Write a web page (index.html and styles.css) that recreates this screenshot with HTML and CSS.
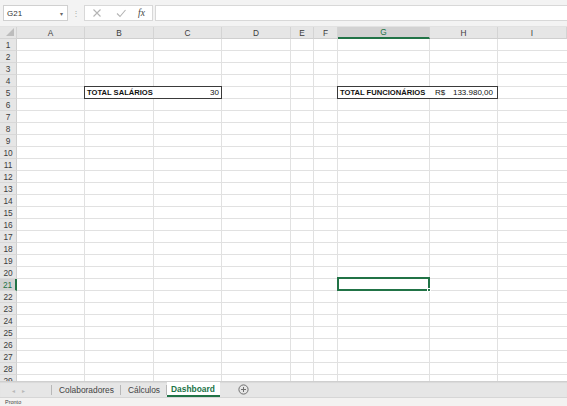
FILE: index.html
```html
<!DOCTYPE html>
<html lang="pt">
<head>
<meta charset="utf-8">
<title>Dashboard</title>
<link rel="stylesheet" href="styles.css">
</head>
<body>
<div class="app">
  <div class="toolbar">
    <div class="namebox"><span>G21</span><span class="caret">▾</span></div>
    <div class="grip">⋮</div>
    <div class="fxbox">
      <svg class="ico" width="10" height="10" viewBox="0 0 10 10"><path d="M1.5 1.5 L8.5 8.5 M8.5 1.5 L1.5 8.5" stroke="#b4b4b4" stroke-width="1.1" fill="none"/></svg>
      <svg class="ico" width="10" height="10" viewBox="0 0 10 10"><path d="M1 5.5 L4 8.5 L9.5 2" stroke="#b4b4b4" stroke-width="1.1" fill="none"/></svg>
      <span class="fx">fx</span>
    </div>
    <div class="formula"></div>
  </div>

  <div class="sheet">
    <div class="corner"><svg width="8" height="8" viewBox="0 0 8 8"><polygon points="8,0 8,8 0,8" fill="#bdbdbd"/></svg></div>
    <div class="colhead">A</div>
    <div class="colhead">B</div>
    <div class="colhead">C</div>
    <div class="colhead">D</div>
    <div class="colhead">E</div>
    <div class="colhead">F</div>
    <div class="colhead active">G</div>
    <div class="colhead">H</div>
    <div class="colhead">I</div>

    <div class="body"></div>

    <div class="rowhead">1</div>
    <div class="rowhead">2</div>
    <div class="rowhead">3</div>
    <div class="rowhead">4</div>
    <div class="rowhead">5</div>
    <div class="rowhead">6</div>
    <div class="rowhead">7</div>
    <div class="rowhead">8</div>
    <div class="rowhead">9</div>
    <div class="rowhead">10</div>
    <div class="rowhead">11</div>
    <div class="rowhead">12</div>
    <div class="rowhead">13</div>
    <div class="rowhead">14</div>
    <div class="rowhead">15</div>
    <div class="rowhead">16</div>
    <div class="rowhead">17</div>
    <div class="rowhead">18</div>
    <div class="rowhead">19</div>
    <div class="rowhead">20</div>
    <div class="rowhead active">21</div>
    <div class="rowhead">22</div>
    <div class="rowhead">23</div>
    <div class="rowhead">24</div>
    <div class="rowhead">25</div>
    <div class="rowhead">26</div>
    <div class="rowhead">27</div>
    <div class="rowhead">28</div>
    <div class="rowhead">29</div>

    <div class="box box-salarios"><b>TOTAL SALÁRIOS</b><span>30</span></div>
    <div class="box box-func"><b class="lbl">TOTAL FUNCIONÁRIOS</b><span class="cur">R$</span><span class="val">133.980,00</span></div>
    <div class="selection"><span class="handle"></span></div>
  </div>

  <div class="tabs">
    <div class="nav"><span>◂</span><span>▸</span></div>
    <div class="tab">Colaboradores</div>
    <div class="tab">Cálculos</div>
    <div class="tab current">Dashboard</div>
    <div class="add"><svg width="11" height="11" viewBox="0 0 11 11"><circle cx="5.5" cy="5.5" r="4.6" stroke="#6f6f6f" stroke-width="1" fill="none"/><path d="M5.5 3 V8 M3 5.5 H8" stroke="#6f6f6f" stroke-width="1"/></svg></div>
  </div>

  <div class="status">Pronto</div>
</div>
</body>
</html>
```

FILE: styles.css
```css
* { box-sizing: border-box; }
html, body { margin: 0; padding: 0; }
body {
  width: 567px;
  height: 406px;
  overflow: hidden;
  font-family: "Liberation Sans", Arial, sans-serif;
  color: #222;
  background: #fff;
}
.app {
  width: 567px;
  height: 406px;
  display: flex;
  flex-direction: column;
  overflow: hidden;
}

/* toolbar */
.toolbar {
  height: 27px;
  flex: 0 0 27px;
  background: #f3f3f3;
  display: flex;
  align-items: flex-start;
  padding: 5px 0 0 3px;
  border-bottom: 1px solid #e2e2e2;
}
.namebox {
  width: 65px;
  height: 16px;
  background: #fff;
  border: 1px solid #d0d0d0;
  display: flex;
  align-items: center;
  justify-content: space-between;
  padding: 0 4px 0 3px;
  font-size: 8px;
  color: #333;
}
.caret { font-size: 6px; color: #666; }
.grip {
  width: 16px;
  height: 16px;
  display: flex;
  align-items: center;
  justify-content: center;
  font-size: 8px;
  color: #a8a8a8;
}
.fxbox {
  width: 69px;
  height: 16px;
  background: #fff;
  border: 1px solid #d8d8d8;
  display: flex;
  align-items: center;
  padding-left: 7px;
  gap: 14px;
}
.ico { display: block; }
.fx {
  font-family: "Liberation Serif", "Times New Roman", serif;
  font-style: italic;
  font-size: 9.5px;
  color: #444;
  margin-left: -2px;
}
.formula {
  flex: 1;
  height: 16px;
  margin-left: 2px;
  background: #fff;
  border: 1px solid #d8d8d8;
  border-right: none;
}

/* sheet grid */
.sheet {
  height: 354px;
  flex: 0 0 354px;
  overflow: hidden;
  display: grid;
  grid-template-columns: 17px 68px 69px 68px 69px 23px 24px 92px 68px 69px;
  grid-auto-rows: 12px;
  font-size: 8px;
}
.corner {
  grid-row: 1;
  grid-column: 1;
  background: #e6e6e6;
  border-right: 1px solid #d4d4d4;
  border-bottom: 1px solid #d4d4d4;
  display: flex;
  align-items: flex-end;
  justify-content: flex-end;
  padding: 0 2px 2px 0;
}
.colhead {
  grid-row: 1;
  background: #e6e6e6;
  border-right: 1px solid #d4d4d4;
  border-bottom: 1px solid #cfcfcf;
  display: flex;
  align-items: center;
  justify-content: center;
  color: #3c3c3c;
  font-size: 8.3px;
}
.colhead.active {
  background: #d2d2d2;
  color: #217346;
  border-bottom: 2px solid #217346;
}
.body {
  grid-row: 2 / 32;
  grid-column: 2 / 11;
  background:
    linear-gradient(to right, transparent 67px, #e1e1e1 67px 68px, transparent 68px 136px, #e1e1e1 136px 137px, transparent 137px 204px, #e1e1e1 204px 205px, transparent 205px 273px, #e1e1e1 273px 274px, transparent 274px 296px, #e1e1e1 296px 297px, transparent 297px 320px, #e1e1e1 320px 321px, transparent 321px 412px, #e1e1e1 412px 413px, transparent 413px 480px, #e1e1e1 480px 481px, transparent 481px),
    repeating-linear-gradient(to bottom, transparent 0 11px, #e1e1e1 11px 12px);
}
.rowhead {
  grid-column: 1;
  background: #e6e6e6;
  border-right: 1px solid #cfcfcf;
  border-bottom: 1px solid #d8d8d8;
  display: flex;
  align-items: center;
  justify-content: center;
  color: #3c3c3c;
  font-size: 8.3px;
}
.rowhead.active {
  background: #d2d2d2;
  color: #217346;
  border-right: 2px solid #217346;
}

.box {
  border: 1px solid #3a3a3a;
  background: #fff;
  display: flex;
  align-items: center;
  padding: 0 2px;
  margin: -1px 0 0 -1px;
  font-size: 7.6px;
  color: #111;
  z-index: 1;
}
.box b { font-weight: bold; }
.box span { font-size: 8px; }
.box-salarios {
  grid-row: 6;
  grid-column: 3 / 5;
  justify-content: space-between;
}
.box-func {
  grid-row: 6;
  grid-column: 8 / 10;
}
.box-func .lbl { width: 91px; }
.box-func .cur { margin-left: 4px; }
.box-func .val { margin-left: auto; margin-right: 2px; }

.selection {
  grid-row: 22;
  grid-column: 8;
  border: 2px solid #217346;
  margin: -2px 0 0 -1px;
  z-index: 2;
  position: relative;
}
.handle {
  position: absolute;
  right: -3px;
  bottom: -3px;
  width: 4px;
  height: 4px;
  background: #217346;
  border: 1px solid #fff;
}

/* tabs */
.tabs {
  height: 16px;
  flex: 0 0 16px;
  background: #e6e6e6;
  border-top: 1px solid #cfcfcf;
  box-shadow: inset 0 1px 1px rgba(0,0,0,0.06);
  display: flex;
  align-items: stretch;
  font-size: 8.4px;
  color: #444;
}
.nav {
  width: 52px;
  display: flex;
  align-items: center;
  padding-left: 12px;
  gap: 7px;
  color: #b8b8b8;
  font-size: 6px;
  border-right: 1px solid #b8b8b8;
  margin: 3px 0 2px;
}
.tab {
  display: flex;
  align-items: center;
  padding: 0 6px 0 7px;
  border-right: 1px solid #b8b8b8;
  margin: 3px 0 2px;
}
.tab.current {
  margin: 0;
  background: #fff;
  color: #217346;
  font-weight: bold;
  border-right: none;
  border-bottom: 2px solid #217346;
  padding: 1px 5px 0 4px;
}
.add {
  display: flex;
  align-items: center;
  margin-left: 18px;
}
.add svg { display: block; }

.status {
  flex: 1;
  background: #f3f2f1;
  font-size: 5.5px;
  line-height: 7px;
  color: #444;
  padding: 1px 0 0 5px;
  border-top: 1px solid #d6d6d6;
  overflow: hidden;
}
```
